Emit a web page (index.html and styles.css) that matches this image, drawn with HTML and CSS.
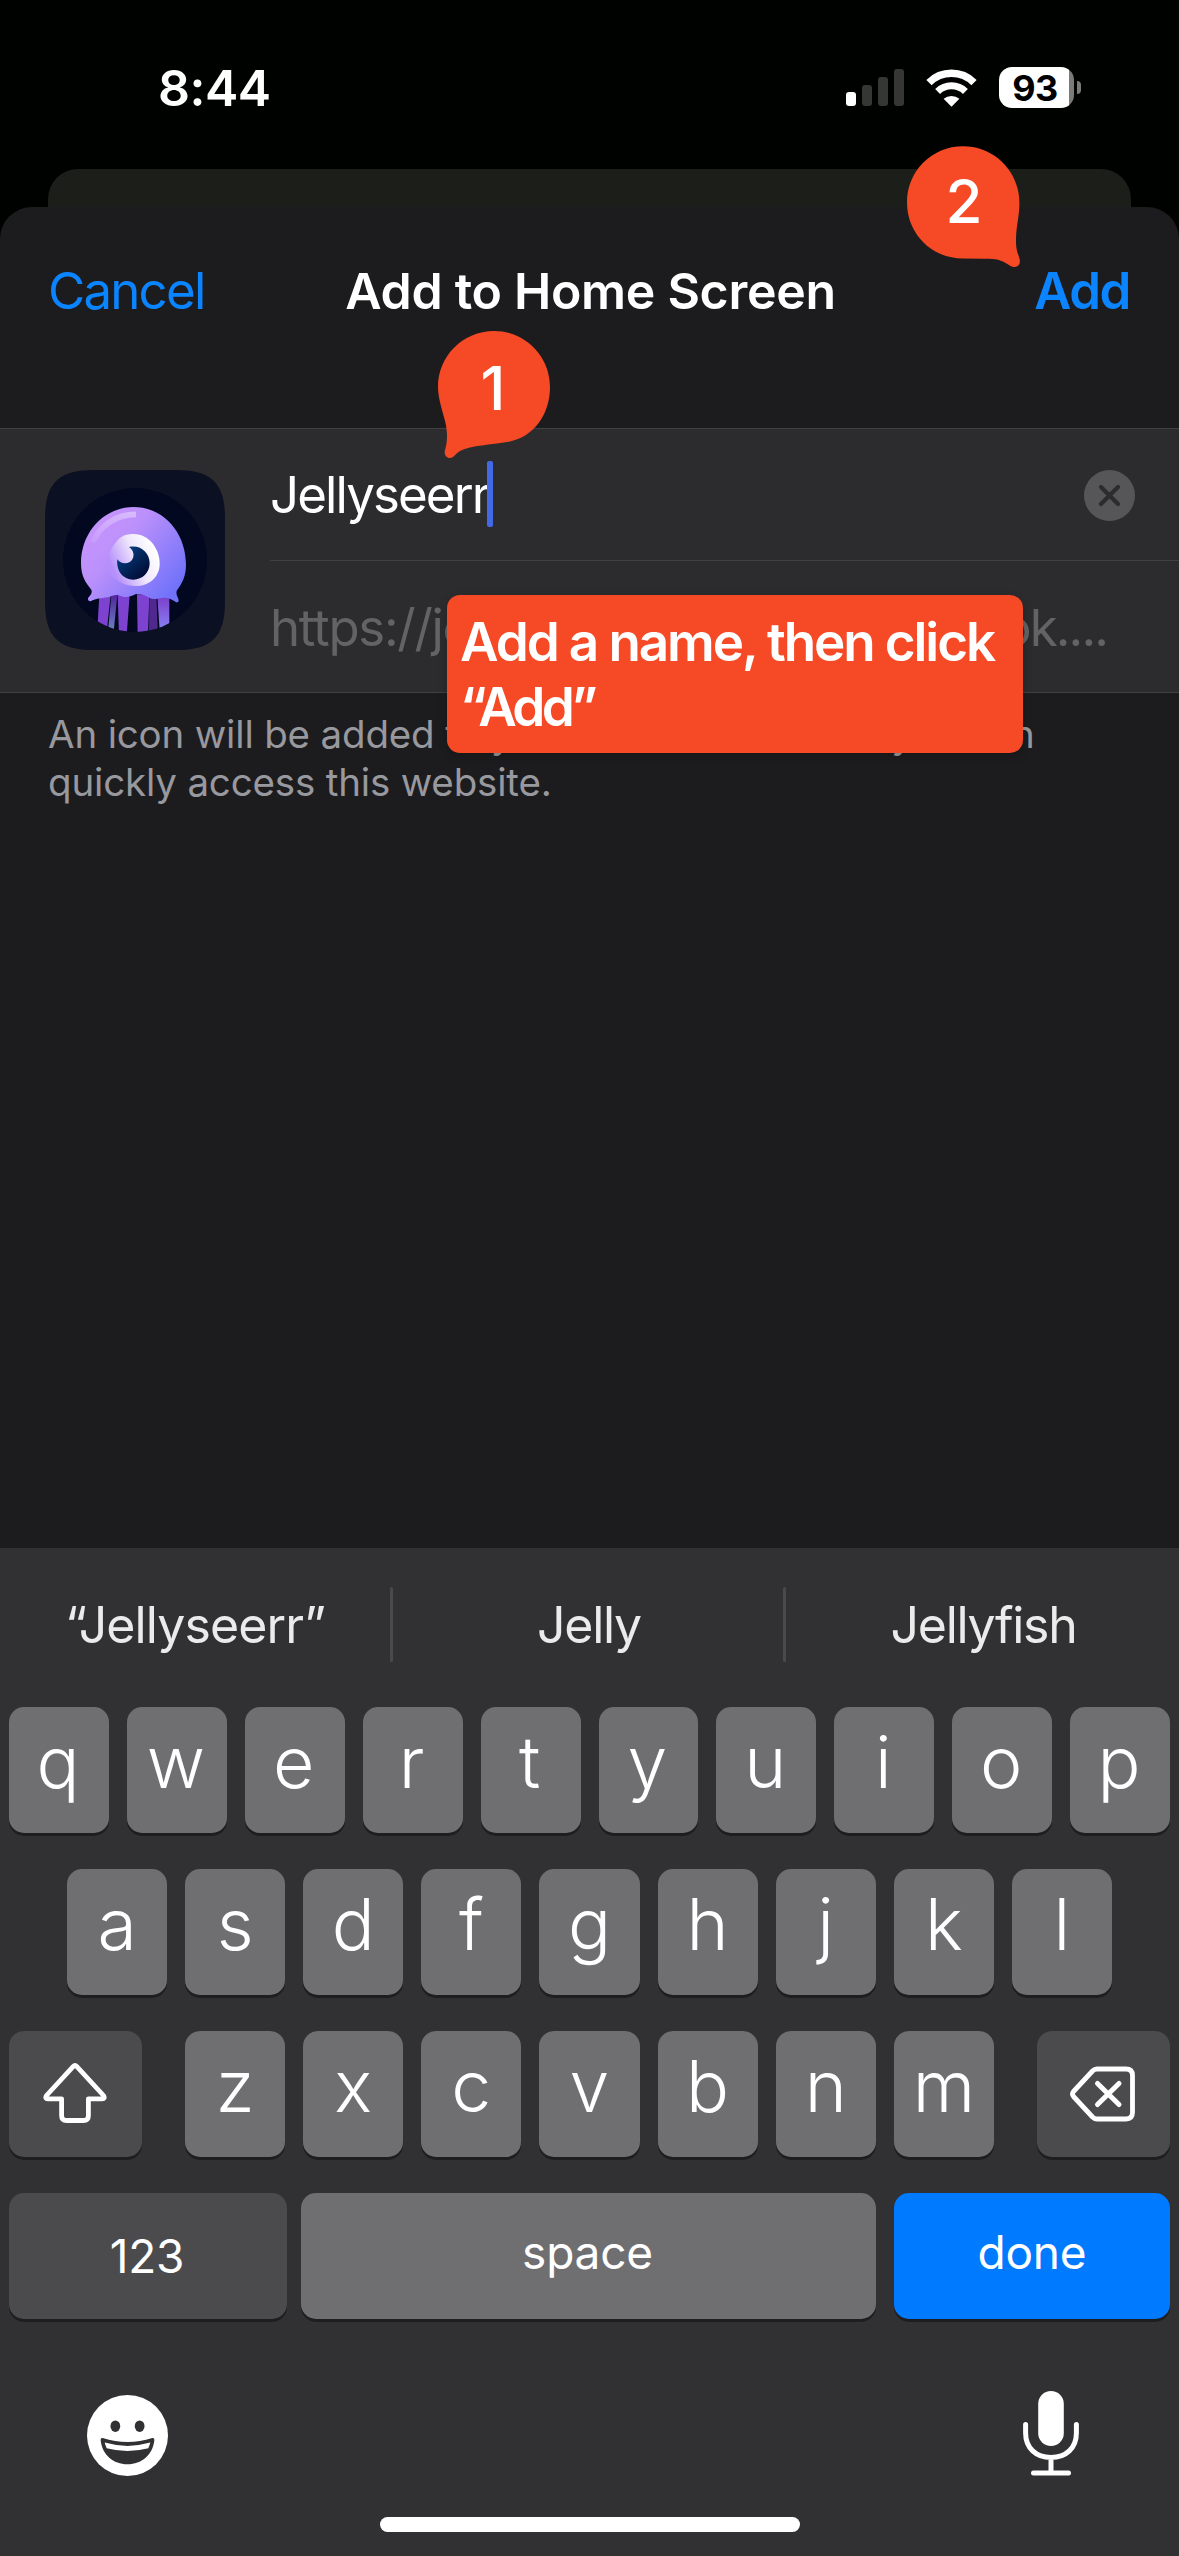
FILE: index.html
```html
<!DOCTYPE html>
<html lang="en">
<head>
<meta charset="utf-8">
<title>Add to Home Screen</title>
<link rel="stylesheet" href="styles.css">
</head>
<body>
<div class="screen">
  <header class="status">
    <div class="time">8:44</div>
    <div class="indicators">
      <svg class="signal" viewBox="0 0 58 37"><rect x="0" y="23" width="10" height="14" rx="3" fill="#fff"/><g fill="#363734"><rect x="16" y="16" width="10" height="21" rx="3"/><rect x="32" y="8" width="10" height="29" rx="3"/><rect x="48" y="0" width="10" height="37" rx="3"/></g></svg>
      <svg class="wifi" viewBox="0 0 51 38"><g fill="none" stroke="#fff"><path d="M3 13.6A32 32 0 0 1 48 13.6" stroke-width="7.5"/><path d="M11.6 22.4A20 20 0 0 1 39.4 22.4" stroke-width="7"/></g><path d="M17.6 29.8A12.4 12.4 0 0 1 33.4 29.8L25.5 37.8Z" fill="#fff"/></svg>
      <div class="battery"><span class="charge">93</span></div>
      <span class="nub"></span>
    </div>
  </header>
  <div class="backdrop"></div>
  <main class="sheet">
    <div class="navbar">
      <span class="cancel">Cancel</span>
      <h1 class="title">Add to Home Screen</h1>
      <span class="add">Add</span>
    </div>
    <section class="form">
      <svg class="app-icon" viewBox="15 15 540 540">
        <defs>
          <linearGradient id="bell" x1="0.15" y1="0.2" x2="0.95" y2="0.8"><stop offset="0" stop-color="#c593fc"/><stop offset="0.3" stop-color="#bb90fb"/><stop offset="1" stop-color="#7072fa"/></linearGradient>
          <linearGradient id="eye" x1="0.9" y1="0.3" x2="0.1" y2="0.65"><stop offset="0" stop-color="#fff"/><stop offset="0.45" stop-color="#eee5fc"/><stop offset="1" stop-color="#b690fa"/></linearGradient>
          <linearGradient id="pupil" x1="0.1" y1="0.1" x2="0.8" y2="0.9"><stop offset="0" stop-color="#053f84"/><stop offset="1" stop-color="#010d35"/></linearGradient>
          <linearGradient id="legblue" x1="0" y1="0" x2="0" y2="1"><stop offset="0" stop-color="#7d3ecb"/><stop offset="1" stop-color="#8a8dfa"/></linearGradient>
          <linearGradient id="legteal" x1="0" y1="0" x2="0" y2="1"><stop offset="0" stop-color="#50269a"/><stop offset="1" stop-color="#6f8ec6"/></linearGradient>
          <linearGradient id="shine" x1="1" y1="0" x2="0" y2="1"><stop offset="0" stop-color="#fff" stop-opacity=".38"/><stop offset="1" stop-color="#fff" stop-opacity=".08"/></linearGradient>
          <clipPath id="disc"><circle cx="285" cy="285" r="216"/></clipPath>
        </defs>
        <path d="M15 160C15 55 55 15 160 15H410C515 15 555 55 555 160V410C555 515 515 555 410 555H160C55 555 15 515 15 410Z" fill="#0b1122"/>
        <circle cx="285" cy="285" r="216" fill="#010820"/>
        <g clip-path="url(#disc)">
          <path d="M178 390H212L199 510H171Z" fill="#7d42cf"/>
          <path d="M214 390H232L220 510H203Z" fill="url(#legteal)"/>
          <path d="M233 390H269L260 510H237Z" fill="#7d42cf"/>
          <path d="M291 388H328L324 510H293Z" fill="#7d42cf"/>
          <path d="M328 394H349L354 510H327Z" fill="#50298f"/>
          <path d="M352 394H388V510H360Z" fill="url(#legblue)"/>
        </g>
        <path d="M281 126C371 126 438 203 438 300C438 337 424 357 411 376C405 387 416 399 416 406C416 412 411 414 406 410C394 401 384 399 373 398C354 399 343 406 329 399C313 390 301 385 286 388C267 398 253 399 236 391C225 388 217 393 204 397C181 400 168 401 153 408C145 411 141 402 146 397C151 390 158 385 154 374C139 355 123 337 123 294C123 203 191 126 281 126Z" fill="url(#bell)"/>
        <path d="M288 148C225 148 179 184 158 232" fill="none" stroke="url(#shine)" stroke-width="17"/>
        <path d="M281 207C329 207 359 254 359 296C359 336 328 363 286 363C241 363 202 334 202 292C202 264 222 236 237 221C249 210 264 207 281 207Z" fill="url(#eye)"/>
        <path d="M267 246C302 238 329 264 329 295C329 323 307 344 280 344C250 344 228 319 232 283C240 295 256 298 268 292C284 282 286 259 267 246Z" fill="url(#pupil)"/>
      </svg>
      <div class="fields">
        <div class="field">
          <span class="name">Jellyseerr</span><span class="caret"></span>
          <svg class="clear" viewBox="0 0 51 51"><circle cx="25.500" cy="25.500" r="25.500" fill="#565658"/><path d="M17 17L34 34M34 17L17 34" stroke="#2c2c2e" stroke-width="4.200" stroke-linecap="round"/></svg>
        </div>
        <div class="field url"><span>https://jellyseerr.</span><span class="tail">book....</span></div>
      </div>
    </section>
    <p class="note">An icon will be added to your Home Screen so you can quickly access this website.</p>
  </main>
  <section class="keyboard">
    <div class="suggestions">
      <span class="typed">“Jellyseerr”</span><i></i><span>Jelly</span><i></i><span>Jellyfish</span>
    </div>
    <div class="keys">
      <div class="row top"><b>q</b><b>w</b><b>e</b><b>r</b><b>t</b><b>y</b><b>u</b><b>i</b><b>o</b><b>p</b></div>
      <div class="row middle"><b>a</b><b>s</b><b>d</b><b>f</b><b>g</b><b>h</b><b>j</b><b>k</b><b>l</b></div>
      <div class="row lower">
        <div class="key special"><svg class="shift" viewBox="0 0 64 62"><path d="M30.300 4.300Q32 2.500 33.700 4.300L60.500 33.500Q62.500 36.800 59 36.800H45.400V53.500Q45.400 58.500 40.400 58.500H23.600Q18.600 58.500 18.600 53.500V36.800H5Q1.500 36.800 3.500 33.500Z" fill="none" stroke="#fff" stroke-width="4.800" stroke-linejoin="round"/></svg></div>
        <div class="row letters"><b>z</b><b>x</b><b>c</b><b>v</b><b>b</b><b>n</b><b>m</b></div>
        <div class="key special"><svg class="delete" viewBox="0 0 66 56"><path d="M27 3H56Q62.500 3 62.500 9.500V46.500Q62.500 53 56 53H27Q24.500 53 22.500 51L3.500 30.500Q1.500 28 3.500 25.500L22.500 5Q24.500 3 27 3Z" fill="none" stroke="#fff" stroke-width="4.800" stroke-linejoin="round"/><path d="M27.500 17.500L49 38.500M49 17.500L27.500 38.500" stroke="#fff" stroke-width="5" stroke-linecap="round"/></svg></div>
      </div>
      <div class="row bottom"><div class="key special">123</div><div class="key space">space</div><div class="key done">done</div></div>
    </div>
    <div class="tools">
      <svg class="emoji" viewBox="0 0 80 80"><circle cx="40" cy="40" r="40" fill="#fff"/><g fill="#313133"><ellipse cx="28" cy="30.800" rx="4.800" ry="5.700"/><ellipse cx="52" cy="30.800" rx="4.800" ry="5.700"/><path d="M15.500 42.500Q40 50.500 64.500 42.500Q67 42 66.500 45C65 59 54 68.500 40 68.500C26 68.500 15 59 13.500 45Q13 42 15.500 42.500Z"/></g><path d="M17.500 47Q40 53.500 62.500 47Q62 50 60.500 52.500Q40 58 19.500 52.500Q18 50 17.500 47Z" fill="#fff"/></svg>
      <svg class="mic" viewBox="0 0 56 86"><rect x="15.200" y="0" width="25.600" height="55" rx="12.800" fill="#fff"/><path d="M2.600 33.500V42C2.600 57 13 66.500 28 66.500C43 66.500 53.400 57 53.400 42V33.500M28 67V81M10.500 82H45.500" fill="none" stroke="#fff" stroke-width="5" stroke-linecap="round"/></svg>
    </div>
    <div class="home"></div>
  </section>

  <div class="marker one"><svg viewBox="0 0 128 140"><path d="M8 67C8 79 13 92 15.500 103C18 115 17 123 15.300 129C13.500 134 16 138 20 138C24 138 26 133 30 131C42 125 60 125 79 121.700C104 117 120 94 120 67C120 36 95 11 64 11C33 11 8 36 8 67Z" fill="#f54a25"/></svg><span>1</span></div>
  <div class="marker two"><svg viewBox="0 0 128 140"><path d="M119.400 63C119.400 77 116 86 116 100C116 112 118.500 114 119.600 119C120.800 124 118 127 115 127C112.500 127 111 126.500 109 125C101 119.500 96 118.700 85 118.700L63 118.500C32 118.500 7 94 7 62.500C7 31 32 6.300 63 6.300C94 6.300 119.400 31 119.400 63Z" fill="#f54a25"/></svg><span>2</span></div>
  <div class="callout">Add a name, then click <span class="quoted">“Add”</span></div>
</div>
</body>
</html>
```
FILE: styles.css
```css
* { box-sizing: border-box; }
body { margin: 0; background: #000; }
svg { display: block; }
.screen {
  position: relative;
  display: flex;
  flex-direction: column;
  width: 1179px;
  height: 2556px;
  overflow: hidden;
  background: #000200;
  color: #fff;
  font-family: Inter, "Liberation Sans", sans-serif;
  font-size: 50px;
}

/* status bar */
.status {
  display: flex;
  justify-content: space-between;
  height: 169px;
  padding: 0 98px 0 158px;
}
.time { font-weight: 600; font-size: 50px; line-height: 60px; margin-top: 58px; letter-spacing: -0.5px; }
.indicators { display: flex; align-items: center; height: 41px; margin-top: 67px; }
.signal { width: 58px; height: 37px; margin-right: 22px; }
.wifi { width: 51px; height: 38px; margin-right: 22px; }
.battery { width: 75px; height: 41px; border-radius: 13px; background: linear-gradient(90deg, #fff 70px, #7a7a7a 70px); }
.charge { display: block; width: 72px; text-align: center; color: #000; font-weight: 650; font-size: 36px; line-height: 42px; letter-spacing: -0.5px; }
.nub { width: 4px; height: 13px; margin-left: 3px; border-radius: 0 5px 5px 0; background: #7a7a7a; }

/* page card behind the sheet */
.backdrop { height: 68px; margin: 0 48px -30px; border-radius: 30px 30px 0 0; background: #1b1e19; }

/* sheet */
.sheet { position: relative; height: 1341px; border-radius: 32px 32px 0 0; background: #1c1c1e; }
.navbar { display: grid; grid-template-columns: 1fr auto 1fr; align-items: center; height: 167px; padding: 0 48px; margin-bottom: 54px; font-size: 51px; }
.title { margin: 0; padding-left: 2px; font-size: 50px; font-weight: 600; letter-spacing: -0.3px; }
.cancel { color: #0b84ff; letter-spacing: -1.8px; }
.add { padding-right: 1px; color: #0b84ff; font-weight: 600; text-align: right; letter-spacing: -1.4px; }
.form { display: flex; align-items: center; height: 265px; padding-left: 45px; border: solid #414144; border-width: 1px 0; background: #2c2c2e; }
.app-icon { flex: none; width: 180px; height: 180px; margin: -2px 45px 0 0; }
.fields { flex: 1; align-self: stretch; }
.field { display: flex; align-items: center; height: 131px; padding-right: 44px; font-size: 51px; letter-spacing: -1.9px; }
.url { height: 132px; border-top: 1px solid #414144; padding: 1px 72px 0 0; justify-content: space-between; color: #636366; letter-spacing: -1.3px; }
.tail { letter-spacing: -1.9px; }
.caret { width: 6px; height: 66px; margin: -1px 0 0 -2px; border-radius: 2px; background: #4469e6; }
.clear { width: 51px; height: 51px; margin: 1px 0 0 auto; }
.note { margin: 17px 0 0; padding: 0 110px 0 48px; color: #98989f; font-size: 38.5px; line-height: 48px; letter-spacing: -0.17px; }

/* keyboard */
.keyboard { display: flex; flex-direction: column; height: 1008px; background: #313133; }
.suggestions { display: grid; grid-template-columns: 390px 3px 390px 3px 1fr; align-items: center; height: 153px; margin-bottom: 6px; text-align: center; font-size: 50px; color: #ebebec; letter-spacing: -1.3px; }
.suggestions span { padding-left: 2px; }
.suggestions .typed { padding-left: 0; letter-spacing: -0.9px; }
.suggestions i { height: 75px; border-radius: 2px; background: #4a4a4c; }
.keys { display: grid; gap: 36px; padding: 0 9px; }
.row { display: grid; grid-auto-flow: column; grid-auto-columns: 1fr; gap: 18px; height: 126px; }
.middle { padding: 0 58px; }
.lower { grid-template-columns: 133px 1fr 133px; gap: 43px; }
.bottom { grid-template-columns: 278px 1fr 276px; column-gap: 18px; }
.row b, .key { display: flex; align-items: center; justify-content: center; border-radius: 15px; background: #6f6f71; box-shadow: 0 3px 0 #1e1e20; }
.row b { font-weight: 340; font-size: 71.5px; line-height: 1; padding-bottom: 15px; }
.top b { padding-right: 2px; }
.key { font-size: 46px; letter-spacing: -0.2px; }
.row .special { padding-right: 2px; background: #4b4b4d; }
.space { margin-left: -4px; padding: 0 2px 8px 0; }
.done { padding-bottom: 8px; }
.row .done { background: #007aff; }
.shift { width: 64px; height: 62px; margin-bottom: 2px; }
.delete { width: 66px; height: 56px; }
.tools { display: flex; justify-content: space-between; align-items: center; height: 86px; margin-top: 72px; padding: 0 100px 0 87px; }
.emoji { width: 81px; height: 81px; margin-top: 2px; }
.mic { width: 56px; height: 86px; }
.home { width: 420px; height: 15px; margin: 40px auto 0; border-radius: 8px; background: #fff; }

/* annotations over the screen */
.marker { position: absolute; width: 128px; height: 140px; }
.marker span { position: absolute; left: 0; width: 128px; text-align: center; font-size: 60px; font-weight: 500; line-height: 60px; }
.one { left: 430px; top: 320px; }
.one span { top: 38px; left: -1px; }
.two { left: 900px; top: 140px; }
.two span { top: 31px; }
.callout { position: absolute; left: 447px; top: 595px; width: 576px; height: 158px; padding: 15px 8px 13px 13px; border-radius: 13px; background: #f54a25; box-shadow: 0 3px 10px rgba(0, 0, 0, 0.2); font-size: 53px; font-weight: 600; line-height: 65px; letter-spacing: -2.1px; }
.quoted { letter-spacing: -3.6px; }
```
